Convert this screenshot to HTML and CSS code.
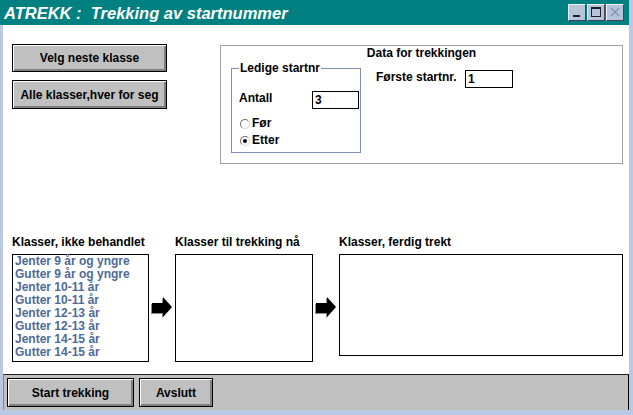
FILE: index.html
```html
<!DOCTYPE html>
<html>
<head>
<meta charset="utf-8">
<title>ATREKK</title>
<link rel="stylesheet" href="styles.css">
</head>
<body>
<div class="window">
  <div class="titlebar">
    <span class="title">ATREKK :  Trekking av startnummer</span>
    <div class="tbtns">
      <span class="tbtn"><svg width="16" height="15" viewBox="0 0 16 15"><rect x="4" y="10" width="7" height="2" fill="#1a1f2a"/></svg></span>
      <span class="tbtn"><svg width="16" height="15" viewBox="0 0 16 15"><rect x="3.5" y="2.5" width="9" height="9" fill="none" stroke="#1a1f2a"/><rect x="3" y="2" width="10" height="2" fill="#1a1f2a"/></svg></span>
      <span class="tbtn"><svg width="16" height="15" viewBox="0 0 16 15"><path d="M4 3 L12 11 M12 3 L4 11" stroke="#8797b8" stroke-width="1.6"/></svg></span>
    </div>
  </div>
  <div class="client">
    <div class="main">
      <div class="top">
        <div class="btncol">
          <button class="btn btn-a">Velg neste klasse</button>
          <button class="btn btn-b">Alle klasser,hver for seg</button>
        </div>
        <div class="dataframe">
          <div class="dtitle">Data for trekkingen</div>
          <div class="drow">
            <fieldset class="ledige">
              <legend>Ledige startnr</legend>
              <div class="antall"><span class="lbl">Antall</span><span class="field f-antall">3</span></div>
              <div class="radios">
                <div class="radio"><span class="circ"></span>Før</div>
                <div class="radio"><span class="circ on"></span>Etter</div>
              </div>
            </fieldset>
            <div class="forste"><span class="lbl lbl-forste">Første startnr.</span><span class="field f-forste">1</span></div>
          </div>
        </div>
      </div>
      <div class="lists">
        <div class="lhead">Klasser, ikke behandlet</div>
        <div></div>
        <div class="lhead">Klasser til trekking nå</div>
        <div></div>
        <div class="lhead">Klasser, ferdig trekt</div>

        <div class="listbox">
          <div>Jenter 9 år og yngre</div>
          <div>Gutter 9 år og yngre</div>
          <div>Jenter 10-11 år</div>
          <div>Gutter 10-11 år</div>
          <div>Jenter 12-13 år</div>
          <div>Gutter 12-13 år</div>
          <div>Jenter 14-15 år</div>
          <div>Gutter 14-15 år</div>
        </div>
        <div class="arrow"><svg width="24" height="22" viewBox="0 0 24 22"><polygon points="1,7 12,7 12,1 21,11 12,21 12,17 1,17" fill="#8a8a8a"/><polygon points="2,6 13,6 13,0 22,10 13,20 13,16 2,16" fill="#000"/></svg></div>
        <div class="listbox"></div>
        <div class="arrow"><svg width="24" height="22" viewBox="0 0 24 22"><polygon points="1,7 12,7 12,1 21,11 12,21 12,17 1,17" fill="#8a8a8a"/><polygon points="2,6 13,6 13,0 22,10 13,20 13,16 2,16" fill="#000"/></svg></div>
        <div class="listbox listbox-done"></div>
      </div>
    </div>
    <div class="statusbar">
      <button class="btn btn-start">Start trekking</button>
      <button class="btn btn-avs">Avslutt</button>
    </div>
  </div>
</div>
</body>
</html>
```
FILE: styles.css
```css
* { box-sizing: border-box; }
html, body { margin: 0; padding: 0; }
body {
  width: 633px;
  height: 415px;
  overflow: hidden;
  font-family: "Liberation Sans", Arial, sans-serif;
  font-size: 12px;
  font-weight: bold;
  color: #000;
}
.window {
  width: 633px;
  height: 415px;
  background: #b9c9e4;
  display: flex;
  flex-direction: column;
}
.titlebar {
  height: 25px;
  width: 629px;
  background: #008080;
  display: flex;
  align-items: center;
  justify-content: space-between;
  padding: 0 5px 0 4px;
}
.title {
  color: #fff;
  font-style: italic;
  font-size: 16.5px;
  white-space: pre;
  line-height: 20px;
}
.tbtns { display: flex; gap: 1px; }
.tbtn {
  width: 18px;
  height: 17px;
  background: #b6c3d9;
  border: 1px solid;
  border-color: #eef2f8 #3c4658 #3c4658 #eef2f8;
  display: flex;
  align-items: center;
  justify-content: center;
}
.tbtn svg { display: block; }
.client {
  margin-left: 3px;
  width: 626px;
  height: 385px;
  display: flex;
  flex-direction: column;
}
.main {
  height: 349px;
  background: #fff;
  padding: 19px 0 0 9px;
}
.top { display: flex; align-items: flex-start; }
.btncol { display: flex; flex-direction: column; gap: 8px; width: 155px; }
.btn {
  background: #c0c0c0;
  border: 1px solid #000;
  box-shadow: inset 1px 1px 0 #fff, inset -2px -2px 0 #808080;
  font-family: "Liberation Sans", Arial, sans-serif;
  font-size: 12px;
  font-weight: bold;
  color: #000;
  padding: 0;
  margin: 0;
}
.btn-a { width: 155px; height: 28px; }
.btn-b { width: 155px; height: 29px; }
.dataframe {
  margin-left: 53px;
  margin-top: 1px;
  width: 403px;
  height: 119px;
  border: 1px solid #a0a0a0;
}
.dtitle { text-align: center; line-height: 14px; }
.drow { display: flex; align-items: flex-start; padding-left: 10px; }
.ledige {
  margin: 1px 0 0 0;
  width: 130px;
  height: 92px;
  border: 1px solid #7f90b4;
  padding: 0 1px 0 7px;
  min-width: 0;
}
.ledige legend {
  padding: 0 1px;
  line-height: 14px;
  font-size: 12px;
}
.antall {
  display: flex;
  justify-content: space-between;
  align-items: flex-start;
  margin-top: 16px;
  height: 18px;
}
.lbl { line-height: 14px; }
.field {
  display: block;
  height: 18px;
  border: 1px solid #000;
  background: #fff;
  line-height: 16px;
  padding-left: 2px;
}
.f-antall { width: 47px; }
.radios { margin-top: 6px; }
.radio { display: flex; align-items: center; line-height: 17px; height: 17px; padding-left: 1px; }
.circ {
  width: 10px;
  height: 10px;
  border-radius: 50%;
  border: 1px solid;
  border-color: #6f6f6f #d4d4d4 #d4d4d4 #6f6f6f;
  background: #fff;
  margin-right: 2px;
  display: flex;
  align-items: center;
  justify-content: center;
}
.circ.on::after {
  content: "";
  width: 4px;
  height: 4px;
  border-radius: 50%;
  background: #000;
}
.forste { display: flex; align-items: flex-start; margin: 10px 0 0 15px; }
.lbl-forste { width: 89px; }
.f-forste { width: 48px; }
.lists {
  margin-top: 71px;
  display: grid;
  grid-template-columns: 137px 26px 138px 26px 284px;
  grid-template-rows: 19px 108px;
}
.lhead { line-height: 14px; white-space: nowrap; }
.listbox {
  border: 1px solid #000;
  background: #fff;
  padding: 0 0 0 2px;
  color: #4e6a9a;
  line-height: 13px;
}
.listbox-done { height: 102px; }
.arrow { align-self: center; justify-self: center; }
.arrow svg { display: block; }
.statusbar {
  height: 36px;
  background: #c0c0c0;
  border-top: 1px solid #202020;
  border-right: 1px solid #000;
  border-left: 1px solid #8a8a8a;
  padding: 3px 0 0 3px;
  display: flex;
  align-items: flex-start;
  gap: 5px;
}
.btn-start { width: 127px; height: 29px; }
.btn-avs { width: 74px; height: 29px; }
```
